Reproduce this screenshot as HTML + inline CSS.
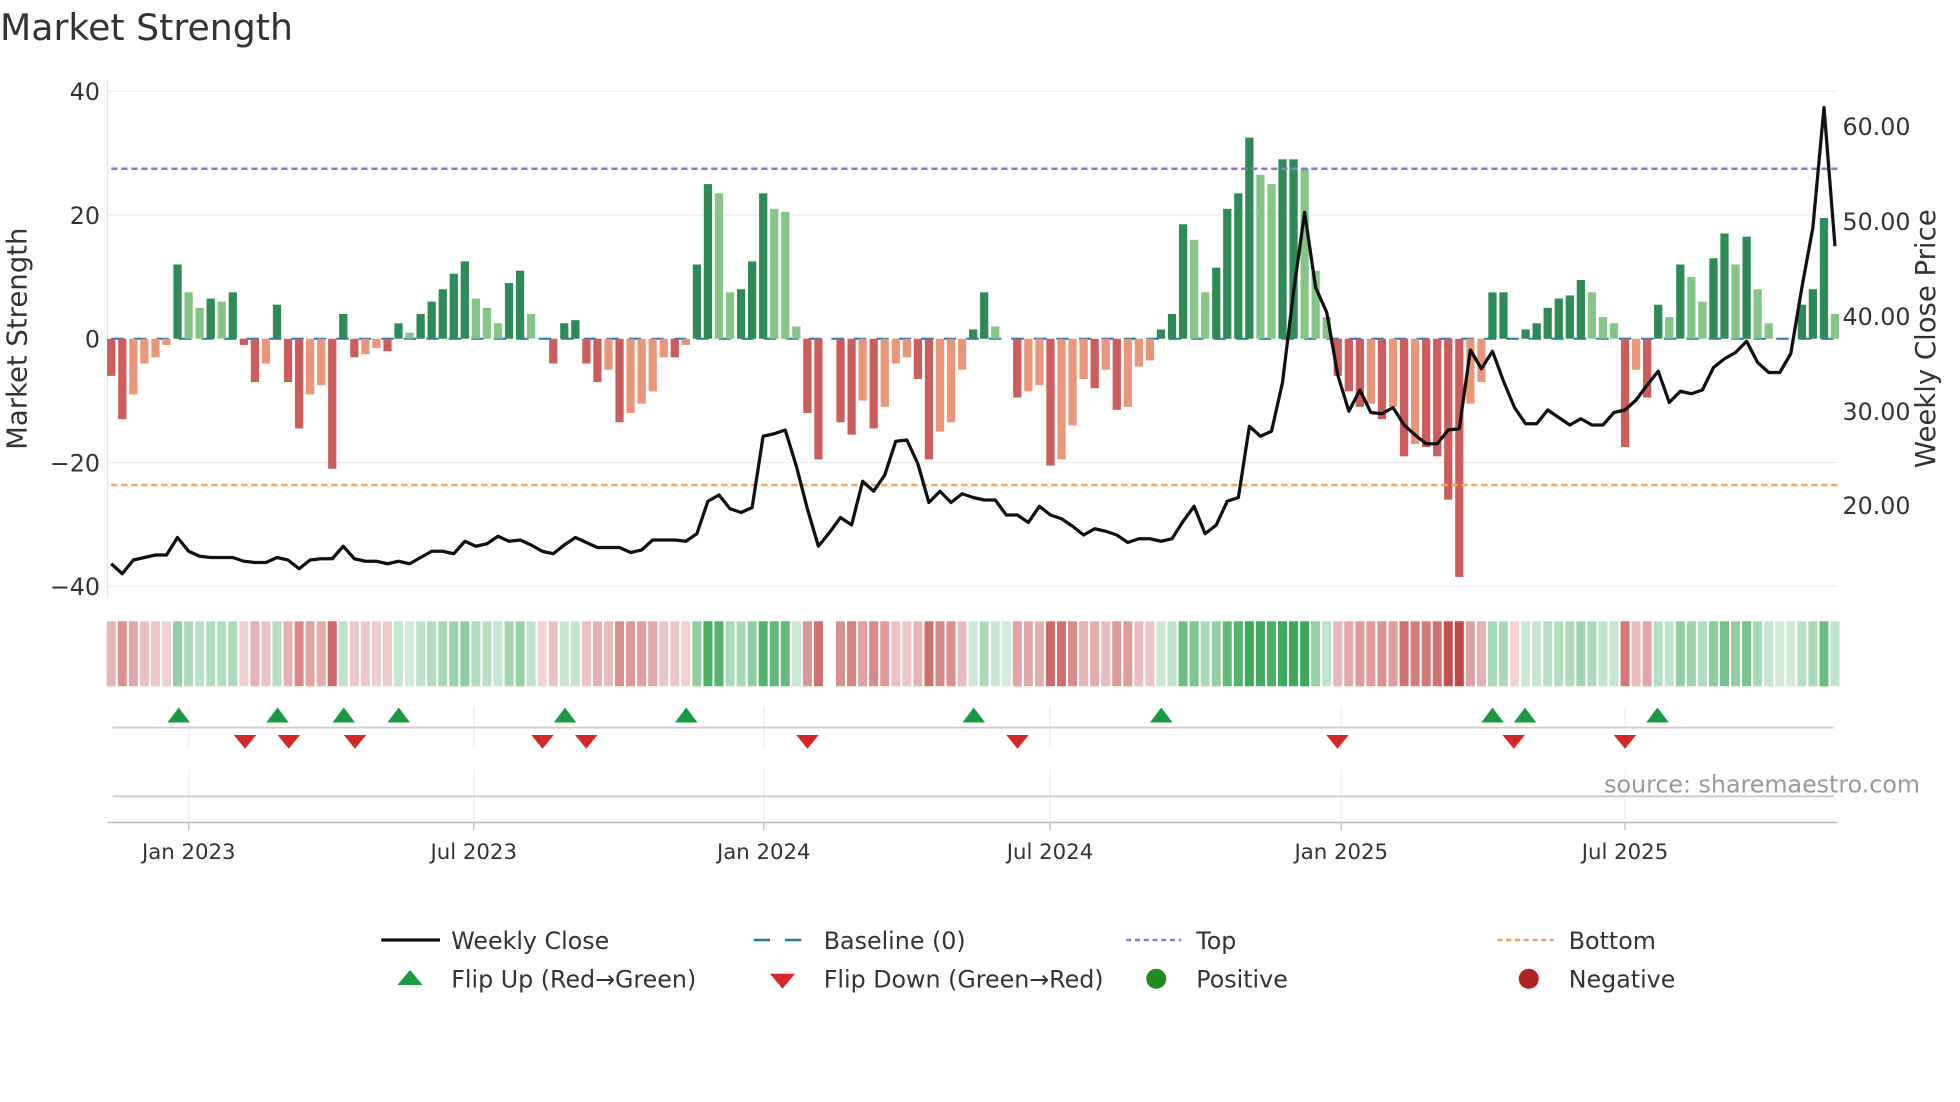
<!DOCTYPE html>
<html><head><meta charset="utf-8"><style>
html,body{margin:0;padding:0;background:#fff;}
svg{display:block;font-family:"DejaVu Sans","Liberation Sans",sans-serif;}
</style></head><body>
<svg id="s" width="1960" height="1102" viewBox="0 0 1568 881.6" xmlns="http://www.w3.org/2000/svg">
<text x="0" y="32" font-size="29" fill="#333">Market Strength</text>
<g stroke="#eee" stroke-width="1">
<line x1="86" x2="1470" y1="73" y2="73"/><line x1="86" x2="1470" y1="172" y2="172"/>
<line x1="86" x2="1470" y1="370" y2="370"/><line x1="86" x2="1470" y1="469" y2="469"/>
</g>
<line x1="86" x2="86" y1="65" y2="478" stroke="#e4e4e4"/>
<g font-size="19" fill="#333" text-anchor="end">
<text x="80" y="80">40</text><text x="80" y="179">20</text><text x="80" y="278">0</text>
<text x="80" y="377">−20</text><text x="80" y="476">−40</text>
</g>
<g font-size="19" fill="#333">
<text x="1474" y="108">60.00</text><text x="1474" y="184">50.00</text><text x="1474" y="260">40.00</text>
<text x="1474" y="336">30.00</text><text x="1474" y="411">20.00</text>
</g>
<text transform="translate(21,271) rotate(-90)" font-size="22" fill="#333" text-anchor="middle">Market Strength</text>
<text transform="translate(1548,271) rotate(-90)" font-size="22" fill="#333" text-anchor="middle">Weekly Close Price</text>
<line x1="89" x2="1470" y1="271" y2="271" stroke="#1f77b4" stroke-width="1.6" stroke-dasharray="10,8"/>
<g id="bars"></g>
<line x1="89" x2="1470" y1="135" y2="135" stroke="#9370db" stroke-width="2" stroke-dasharray="5,3"/>
<line x1="89" x2="1470" y1="388" y2="388" stroke="#f4a460" stroke-width="2" stroke-dasharray="5,3"/>
<polyline id="price" fill="none" stroke="#111" stroke-width="2.6" stroke-linejoin="round"/>
<g id="strip"></g>
<g stroke="#eee" stroke-width="1">
<line x1="151" x2="151" y1="565" y2="598"/><line x1="379" x2="379" y1="565" y2="598"/><line x1="611" x2="611" y1="565" y2="598"/><line x1="840" x2="840" y1="565" y2="598"/><line x1="1073" x2="1073" y1="565" y2="598"/><line x1="1300" x2="1300" y1="565" y2="598"/>
<line x1="151" x2="151" y1="615" y2="656"/><line x1="379" x2="379" y1="615" y2="656"/><line x1="611" x2="611" y1="615" y2="656"/><line x1="840" x2="840" y1="615" y2="656"/><line x1="1073" x2="1073" y1="615" y2="656"/><line x1="1300" x2="1300" y1="615" y2="656"/>
</g>
<line x1="90" x2="1467" y1="582" y2="582" stroke="#ccc" stroke-width="1.5"/>
<line x1="90" x2="1467" y1="637" y2="637" stroke="#ccc" stroke-width="1.5"/>
<line x1="86" x2="1470" y1="658" y2="658" stroke="#bbb" stroke-width="1.2"/>
<g id="flips"></g>
<text x="1536" y="634" font-size="19" fill="#999" text-anchor="end">source: sharemaestro.com</text>
<g font-size="17" fill="#333" text-anchor="middle">
<text x="151" y="687">Jan 2023</text><text x="379" y="687">Jul 2023</text><text x="611" y="687">Jan 2024</text>
<text x="840" y="687">Jul 2024</text><text x="1073" y="687">Jan 2025</text><text x="1300" y="687">Jul 2025</text>
</g>
<g stroke="#bbb"><line x1="151" x2="151" y1="658" y2="664"/><line x1="379" x2="379" y1="658" y2="664"/><line x1="611" x2="611" y1="658" y2="664"/><line x1="840" x2="840" y1="658" y2="664"/><line x1="1073" x2="1073" y1="658" y2="664"/><line x1="1300" x2="1300" y1="658" y2="664"/></g>
<g font-size="19" fill="#333">
<line x1="305" x2="352" y1="752" y2="752" stroke="#111" stroke-width="2.6"/><text x="361" y="759">Weekly Close</text>
<line x1="603" x2="645" y1="752" y2="752" stroke="#1f77b4" stroke-width="2" stroke-dasharray="13,12"/><text x="659" y="759">Baseline (0)</text>
<line x1="901" x2="945" y1="752" y2="752" stroke="#9370db" stroke-width="2" stroke-dasharray="4,3"/><text x="957" y="759">Top</text>
<line x1="1198" x2="1243" y1="752" y2="752" stroke="#f4a460" stroke-width="2" stroke-dasharray="4,3"/><text x="1255" y="759">Bottom</text>
<polygon points="318,788 338,788 328,776" fill="#1a9a40"/><text x="361" y="790">Flip Up (Red→Green)</text>
<polygon points="616,779 636,779 626,791" fill="#d62728"/><text x="659" y="790">Flip Down (Green→Red)</text>
<circle cx="925" cy="783" r="8" fill="#228b22"/><text x="957" y="790">Positive</text>
<circle cx="1223" cy="783" r="8" fill="#b22222"/><text x="1255" y="790">Negative</text>
</g>
</svg>
<script>
var v=[-6,-13,-9,-4,-3,-1,12,7.5,5,6.5,6,7.5,-1,-7,-4,5.5,-7,-14.5,-9,-7.5,-21,4,-3,-2.5,-1.5,-2,2.5,1,4,6,8,10.5,12.5,6.5,5,2.5,9,11,4,-0.5,-4,2.5,3,-4,-7,-5,-13.5,-12,-10.5,-8.5,-3,-3,-1,12,25,23.5,7.5,8,12.5,23.5,21,20.5,2,-12,-19.5,0,-13.5,-15.5,-10,-14.5,-11,-4,-3,-6.5,-19.5,-15,-13.5,-5,1.5,7.5,2,0.2,-9.5,-8.5,-7.5,-20.5,-19.5,-14,-6.5,-8,-5,-11.5,-11,-4.5,-3.5,1.5,4,18.5,16,7.5,11.5,21,23.5,32.5,26.5,25,29,29,27.5,11,3.5,-6,-8.5,-11,-10.5,-13,-11,-19,-17,-17.5,-19,-26,-38.5,-10.5,-7,7.5,7.5,-0.5,1.5,2.5,5,6.5,7,9.5,7.5,3.5,2.5,-17.5,-5,-9.5,5.5,3.5,12,10,6,13,17,12,16.5,8,2.5,0.4,0.4,5.5,8,19.5,4];
var N=v.length,x0=89,dx=(1468-89)/(N-1);
var py=[451,459,448,446,444,444,430,441,445,446,446,446,449,450,450,446,448,455,448,447,447,437,447,449,449,451,449,451,446,441,441,443,433,437,435,429,433,432,436,441,443,436,430,434,438,438,438,442,440,432,432,432,433,427,401,396,407,410,406,349,347,344,373,407,437,426,414,420,385,393,380,353,352,371,402,393,402,395,398,400,400,412,412,418,405,412,415,421,428,423,425,428,434,431,431,433,431,417,405,427,420,401,398,341,349,345,306,233,170,230,250,300,329,312,330,331,326,340,348,355,355,344,343,280,295,281,305,326,339,339,328,334,340,335,340,340,330,328,320,308,297,322,313,315,312,294,287,282,273,290,298,298,283,230,182,86,197];
var b='',s='',p=[];
for(var i=0;i<N;i++){var x=x0+i*dx,val=v[i],pr=i?v[i-1]:0,c;
 if(val>=0)c=(val>=pr)?'#2e8b57':'#86c587';else c=(val<=pr)?'#cd5c5c':'#e9967a';
 var y=271-val*4.95,h=Math.abs(val*4.95);
 if(Math.abs(val)>0.5)b+='<rect x="'+(x-3.3)+'" y="'+Math.min(y,271)+'" width="6.6" height="'+h+'" fill="'+c+'"/>';
 var a=Math.min(1,0.22+Math.abs(val)/35);
 if(val!==0){var sc=val>0?'rgba(60,170,90,'+a+')':'rgba(195,70,70,'+a+')';
 s+='<rect x="'+(x-3.6)+'" y="497" width="7.2" height="52" fill="'+sc+'"/>';}
 if(i<py.length)p.push(x.toFixed(1)+','+py[i]);}
document.getElementById('bars').innerHTML=b;
document.getElementById('strip').innerHTML=s;
document.getElementById('price').setAttribute('points',p.join(' '));
var f='',up=[143,222,275,319,452,549,779,929,1194,1220,1326],dn=[196,231,284,434,469,646,814,1070,1211,1300];
up.forEach(function(x){f+='<polygon points="'+(x-9)+',578 '+(x+9)+',578 '+x+',566" fill="#1a9a40"/>';});
dn.forEach(function(x){f+='<polygon points="'+(x-9)+',588 '+(x+9)+',588 '+x+',599" fill="#d62728"/>';});
document.getElementById('flips').innerHTML=f;
</script>
</body></html>
